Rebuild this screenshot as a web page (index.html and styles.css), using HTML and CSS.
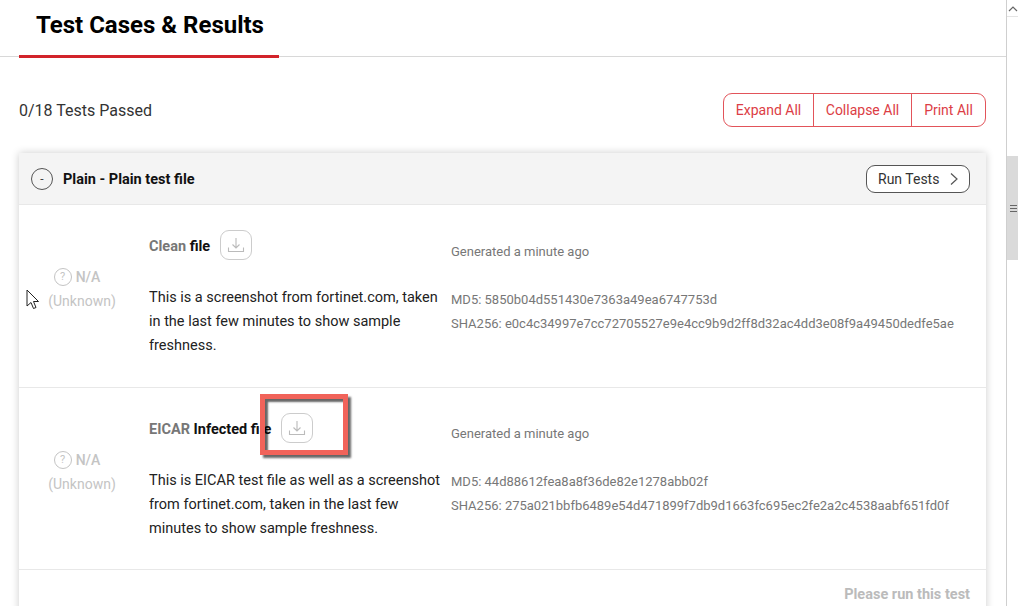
FILE: index.html
```html
<!DOCTYPE html>
<html lang="en">
<head>
    <meta charset="UTF-8">
    <title>Test Cases &amp; Results</title>
    <link rel="stylesheet" href="styles.css">
</head>
<body>
    <div class="window">
        <main class="page">
            <!-- title tab -->
            <header class="tabs">
                <h1 class="tab-active">Test Cases &amp; Results</h1>
            </header>

            <section class="summary">
                <div class="passed">0/18 Tests Passed</div>
                <div class="btn-group">
                    <button class="expand">Expand All</button>
                    <button class="collapse">Collapse All</button>
                    <button class="print">Print All</button>
                </div>
            </section>

            <!-- test group -->
            <section class="card">
                <div class="card-head">
                    <div class="group-title">
                        <span class="toggle">-</span>
                        <h2>Plain - Plain test file</h2>
                    </div>
                    <button class="run-btn">
                        Run Tests
                        <svg width="10" height="14" viewBox="0 0 10 14" fill="none" stroke="#555" stroke-width="1.2"><path d="M2 1.5 8 7l-6 5.5"/></svg>
                    </button>
                </div>

                <div class="test-row">
                    <div class="status">
                        <div class="status-top"><span class="help">?</span> N/A</div>
                        <div>(Unknown)</div>
                    </div>
                    <div class="desc">
                        <div class="file-title">
                            <h3><span class="muted">Clean</span> file</h3>
                            <span class="dl-btn">
                                <svg width="18" height="18" viewBox="0 0 18 18" fill="none" stroke="#bbb" stroke-width="1.1"><path d="M9 2v10M5.500 8.500 9 12l3.500-3.500M1.500 11.500v4h15v-4"/></svg>
                            </span>
                        </div>
                        <p>This is a screenshot from fortinet.com, taken in the last few minutes to show sample freshness.</p>
                    </div>
                    <div class="meta">
                        <div class="generated">Generated a minute ago</div>
                        <div>MD5: 5850b04d551430e7363a49ea6747753d</div>
                        <div>SHA256: e0c4c34997e7cc72705527e9e4cc9b9d2ff8d32ac4dd3e08f9a49450dedfe5ae</div>
                    </div>
                </div>

                <div class="test-row">
                    <div class="status">
                        <div class="status-top"><span class="help">?</span> N/A</div>
                        <div>(Unknown)</div>
                    </div>
                    <div class="desc">
                        <div class="file-title">
                            <h3><span class="muted">EICAR</span> Infected file</h3>
                            <span class="dl-btn">
                                <svg width="18" height="18" viewBox="0 0 18 18" fill="none" stroke="#bbb" stroke-width="1.1"><path d="M9 2v10M5.500 8.500 9 12l3.500-3.500M1.500 11.500v4h15v-4"/></svg>
                            </span>
                        </div>
                        <p>This is EICAR test file as well as a screenshot from fortinet.com, taken in the last few minutes to show sample freshness.</p>
                    </div>
                    <div class="meta">
                        <div class="generated">Generated a minute ago</div>
                        <div>MD5: 44d88612fea8a8f36de82e1278abb02f</div>
                        <div>SHA256: 275a021bbfb6489e54d471899f7db9d1663fc695ec2fe2a2c4538aabf651fd0f</div>
                    </div>
                </div>

                <div class="run-note">Please run this test</div>
            </section>
        </main>

        <!-- browser scrollbar -->
        <div class="scrollbar">
            <div class="arrow-up">
                <svg width="10" height="6" viewBox="0 0 10 6" fill="none" stroke="#666" stroke-width="1.2"><path d="M1 5l4-4 4 4"/></svg>
            </div>
            <div class="thumb"><span class="grip"></span></div>
        </div>

        <!-- annotations on top of the screenshot -->
        <div class="highlight"></div>
        <svg class="cursor" width="14" height="22" viewBox="0 0 14 22"><path d="M1 1v16l4-3.500 2.500 6 2.500-1-2.500-6H12.500z" fill="#fff" stroke="#222" stroke-width="1"/></svg>
    </div>
</body>
</html>
```

FILE: styles.css
```css
* {
    margin: 0;
    padding: 0;
    box-sizing: border-box;
    font-family: Roboto, "Liberation Sans", sans-serif;
}

body {
    background-color: #fff;
    overflow: hidden;
}

.window {
    position: relative;
    display: flex;
    width: 1018px;
    height: 606px;
    overflow: hidden;
}

.page {
    flex: 1;
    min-width: 0;
}

/* title tab */
.tabs {
    height: 57px;
    padding-left: 19px;
    border-bottom: 1px solid #d8d8d8;
}

.tab-active {
    width: 260px;
    height: 58px;
    padding: 11px 0 0 17px;
    border-bottom: 3px solid #d2232a;
    font-size: 24px;
    line-height: 28px;
    font-weight: 700;
    color: #000;
}

/* summary row */
.summary {
    display: flex;
    justify-content: space-between;
    align-items: center;
    height: 96px;
    padding: 10px 20px 0 19px;
}

.passed {
    font-size: 16px;
    color: #333;
}

.btn-group {
    display: flex;
    height: 34px;
    margin-top: -1px;
    border: 1px solid #e2545a;
    border-radius: 9px;
}

.btn-group button {
    border: none;
    background: transparent;
    color: #dc3d45;
    font-size: 14px;
}

.btn-group .expand { width: 89px; }
.btn-group .collapse { width: 99px; border-left: 1px solid #e2545a; border-right: 1px solid #e2545a; }
.btn-group .print { width: 73px; }

/* test group */
.card {
    width: 967px;
    margin-left: 19px;
    background-color: #fff;
    box-shadow: 0 0 8px rgba(0, 0, 0, 0.2);
}

.card-head {
    display: flex;
    justify-content: space-between;
    align-items: center;
    height: 52px;
    padding: 0 16px 0 12px;
    background-color: #f4f4f4;
    border-bottom: 1px solid #e8e8e8;
}

.group-title {
    display: flex;
    align-items: center;
    gap: 10px;
}

.group-title h2 {
    padding-top: 1px;
    font-size: 14.5px;
    font-weight: 700;
    color: #111;
}

.toggle {
    display: flex;
    align-items: center;
    justify-content: center;
    width: 22px;
    height: 22px;
    border: 1px solid #555;
    border-radius: 50%;
    font-size: 12px;
    color: #444;
}

.run-btn {
    display: flex;
    align-items: center;
    justify-content: space-between;
    width: 104px;
    height: 28px;
    padding: 0 10px 0 11px;
    background-color: #fff;
    border: 1px solid #555;
    border-radius: 9px;
    font-size: 14px;
    color: #333;
}

/* test rows */
.test-row {
    display: flex;
    height: 182.5px;
    border-bottom: 1px solid #e8e8e8;
}

.status {
    width: 130px;
    padding: 60px 4px 0 0;
    text-align: center;
    font-size: 14px;
    line-height: 24px;
    color: #c4c4c4;
}

.status-top {
    display: flex;
    justify-content: center;
    align-items: center;
    gap: 4px;
    padding-right: 10px;
    font-weight: 500;
}

.help {
    display: flex;
    align-items: center;
    justify-content: center;
    width: 18px;
    height: 18px;
    border: 1.5px solid #c4c4c4;
    border-radius: 50%;
    font-size: 11px;
    font-weight: 400;
}

.desc {
    width: 302px;
    padding-top: 25px;
}

.file-title {
    display: flex;
    align-items: center;
    gap: 10px;
    height: 30px;
}

.file-title h3 {
    padding-top: 3px;
    font-size: 14.5px;
    font-weight: 700;
    color: #111;
}

.muted {
    color: #777;
}

.dl-btn {
    display: flex;
    align-items: center;
    justify-content: center;
    width: 32px;
    height: 30px;
    border: 1px solid #ccc;
    border-radius: 9px;
}

.desc p {
    width: 294px;
    margin-top: 26px;
    font-size: 14.5px;
    line-height: 24px;
    color: #222;
}

.meta {
    flex: 1;
    padding-top: 34.5px;
    font-size: 13px;
    line-height: 24px;
    color: #777;
}

.generated {
    margin-bottom: 24px;
}

.run-note {
    height: 60px;
    padding: 16px 16px 0 0;
    text-align: right;
    font-size: 14.5px;
    font-weight: 700;
    color: #bbb;
}

/* scrollbar */
.scrollbar {
    position: relative;
    width: 12px;
    border-left: 1px solid #cfcfcf;
    background-color: #fff;
}

.arrow-up {
    display: flex;
    justify-content: center;
    align-items: center;
    height: 16px;
    margin-top: 1px;
    border-bottom: 1px solid #e4e4e4;
}

.thumb {
    display: flex;
    align-items: center;
    height: 104px;
    margin-top: 139px;
    padding-left: 3px;
    background-color: #dadada;
}

.grip {
    width: 7px;
    height: 7px;
    border-top: 1px solid #666;
    border-bottom: 1px solid #666;
    background: linear-gradient(#666, #666) center / 100% 1px no-repeat;
}

/* annotations */
.highlight {
    position: absolute;
    left: 260px;
    top: 394px;
    width: 88px;
    height: 61px;
    border: 5px solid #f1635a;
    box-shadow: 3px 3px 2px rgba(0, 0, 0, 0.6), inset 3px 3px 2px rgba(0, 0, 0, 0.6);
}

.cursor {
    position: absolute;
    left: 26px;
    top: 289px;
}
```
